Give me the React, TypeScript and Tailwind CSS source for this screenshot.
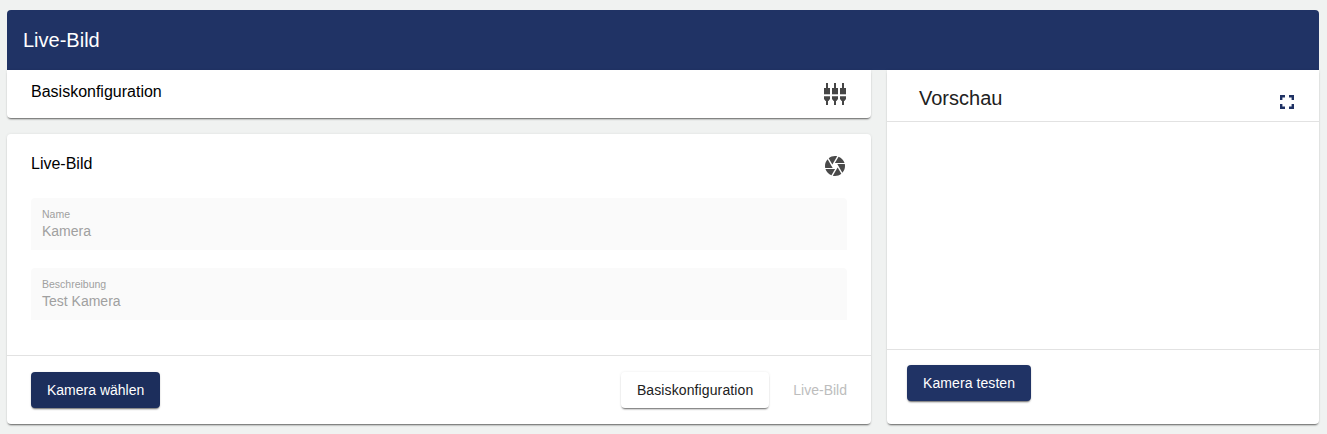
const shadow = "shadow-[0_2px_2px_-1px_rgba(0,0,0,0.6),0_0_3px_0_rgba(0,0,0,0.08)]";

function Jacks() {
  const xs = [0, 8, 16];
  return (
    <svg width="24" height="24" viewBox="0 0 24 24" fill="#454545">
      {xs.map((x) => (
        <g key={x} transform={`translate(${x} 0)`}>
          <rect x="3" y="1" width="2" height="5" />
          <rect x="1" y="6" width="6" height="6.3" />
          <path d="M1 14.2h6v2.8l-1.6 2H5V23H3v-4H2.6L1 17z" />
        </g>
      ))}
    </svg>
  );
}

function Iris() {
  return (
    <svg width="24" height="24" viewBox="0 0 24 24" fill="#4a4a4a">
      <path d="M13.73,15L9.83,21.76C10.53,21.91 11.25,22 12,22C14.4,22 16.6,21.15 18.32,19.75L14.66,13.4M2.46,15C3.38,17.92 5.61,20.26 8.45,21.34L12.12,15M8.54,12L4.64,5.25C3,7 2,9.39 2,12C2,12.68 2.07,13.35 2.2,14H9.69M21.8,10H14.31L14.6,10.5L19.36,18.75C21,16.97 22,14.6 22,12C22,11.31 21.93,10.64 21.8,10M21.54,9C20.62,6.07 18.39,3.74 15.55,2.66L11.88,9M9.4,10.5L14.17,2.24C13.47,2.09 12.75,2 12,2C9.6,2 7.4,2.84 5.68,4.25L9.34,10.6L9.4,10.5Z" />
    </svg>
  );
}

function Fullscreen() {
  return (
    <svg width="24" height="24" viewBox="0 0 24 24" fill="#1f3264">
      <path d="M5 5h5v2.4H7.4V10H5zM14 5h5v5h-2.4V7.4H14zM5 14h2.4v2.6H10V19H5zM16.6 14H19v5h-5v-2.4h2.6z" />
    </svg>
  );
}

function Field({ label, value }: { label: string; value: string }) {
  return (
    <div className="h-[52px] rounded-t-[4px] bg-[#fafafa] px-[11px] pt-[10px]">
      <div className="text-[10.5px] leading-[13px] text-[#a0a0a0]">{label}</div>
      <div className="text-[14px] leading-[20px] text-[#a0a0a0]">{value}</div>
    </div>
  );
}

export default function App() {
  return (
    <div className="h-[434px] overflow-hidden bg-[#f0f2f1] pl-[7px] pr-[8px] pt-[10px] font-['Liberation_Sans',Arial,sans-serif]">
      <div className="flex h-[60px] items-center rounded-t-[4px] bg-[#203365] pl-[16px] text-[20px] text-white">Live-Bild</div>
      <div className="flex gap-[16px]">
        <div className="flex w-[864px] flex-col gap-[16px]">
          <section className={`flex h-[48px] items-start justify-between rounded-b-[4px] bg-white px-[24px] ${shadow}`}>
            <h2 className="mt-[12px] text-[16px] leading-[20px] text-black">Basiskonfiguration</h2>
            <div className="mt-[12px]"><Jacks /></div>
          </section>
          <section className={`flex h-[290px] flex-col rounded-[4px] bg-white ${shadow}`}>
            <div className="flex-1 px-[24px] pt-[20px]">
              <div className="flex h-[24px] items-start justify-between">
                <h2 className="text-[16px] leading-[20px] text-black">Live-Bild</h2>
                <Iris />
              </div>
              <div className="mt-[20px] flex flex-col gap-[18px]">
                <Field label="Name" value="Kamera" />
                <Field label="Beschreibung" value="Test Kamera" />
              </div>
            </div>
            <div className="flex h-[69px] items-start justify-between border-t border-[#e2e2e2] px-[24px] pt-[16px]">
              <button className={`h-[36px] rounded-[4px] bg-[#1c2e5c] px-[16px] text-[14px] text-white ${shadow}`}>Kamera wählen</button>
              <div className="flex">
                <button className={`h-[36px] rounded-[4px] bg-white px-[16px] text-[14px] tracking-[0.11px] text-[#212121] ${shadow}`}>Basiskonfiguration</button>
                <button className="ml-[8px] h-[36px] pl-[16px] text-[14px] text-[#bdbdbd]">Live-Bild</button>
              </div>
            </div>
          </section>
        </div>
        <section className={`flex h-[354px] w-[432px] flex-col rounded-b-[4px] bg-white ${shadow}`}>
          <div className="flex h-[52px] items-start justify-between border-b border-[#e2e2e2] pl-[32px] pr-[20px]">
            <h2 className="mt-[16px] text-[20px] leading-[24px] text-[#212121]">Vorschau</h2>
            <div className="mt-[20px]"><Fullscreen /></div>
          </div>
          <div className="flex-1" />
          <div className="h-[75px] border-t border-[#e2e2e2] px-[20px] pt-[15px]">
            <button className={`h-[36px] rounded-[4px] bg-[#203365] px-[16px] text-[14px] tracking-[0.08px] text-white ${shadow}`}>Kamera testen</button>
          </div>
        </section>
      </div>
    </div>
  );
}
